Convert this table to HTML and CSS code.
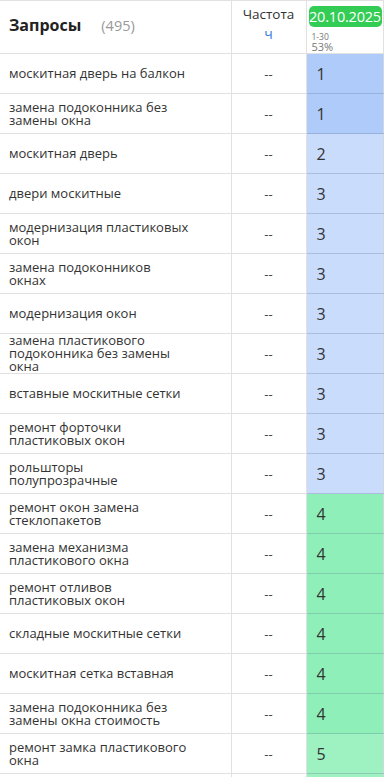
FILE: index.html
```html
<!DOCTYPE html>
<html lang="ru">
<head>
<meta charset="utf-8">
<link rel="stylesheet" href="styles.css">
</head>
<body>
<table class="grid">
  <thead>
    <tr class="head">
      <th class="q-head"><span class="title">Запросы</span><span class="count">(495)</span></th>
      <th class="f-head"><div class="f-label">Частота</div><div class="f-unit">ч</div></th>
      <th class="d-head"><div class="badge">20.10.2025</div><div class="range">1-30</div><div class="pct">53%</div></th>
    </tr>
  </thead>
  <tbody>
    <tr><td class="q">москитная дверь на балкон</td><td class="f">--</td><td class="r r1">1</td></tr>
    <tr><td class="q">замена подоконника без замены окна</td><td class="f">--</td><td class="r r1">1</td></tr>
    <tr><td class="q">москитная дверь</td><td class="f">--</td><td class="r r2">2</td></tr>
    <tr><td class="q">двери москитные</td><td class="f">--</td><td class="r r2">3</td></tr>
    <tr><td class="q">модернизация пластиковых окон</td><td class="f">--</td><td class="r r2">3</td></tr>
    <tr><td class="q">замена подоконников окнах</td><td class="f">--</td><td class="r r2">3</td></tr>
    <tr><td class="q">модернизация окон</td><td class="f">--</td><td class="r r2">3</td></tr>
    <tr><td class="q">замена пластикового подоконника без замены окна</td><td class="f">--</td><td class="r r2">3</td></tr>
    <tr><td class="q">вставные москитные сетки</td><td class="f">--</td><td class="r r2">3</td></tr>
    <tr><td class="q">ремонт форточки пластиковых окон</td><td class="f">--</td><td class="r r2">3</td></tr>
    <tr><td class="q">рольшторы полупрозрачные</td><td class="f">--</td><td class="r r2">3</td></tr>
    <tr><td class="q">ремонт окон замена стеклопакетов</td><td class="f">--</td><td class="r r4">4</td></tr>
    <tr><td class="q">замена механизма пластикового окна</td><td class="f">--</td><td class="r r4">4</td></tr>
    <tr><td class="q">ремонт отливов пластиковых окон</td><td class="f">--</td><td class="r r4">4</td></tr>
    <tr><td class="q">складные москитные сетки</td><td class="f">--</td><td class="r r4">4</td></tr>
    <tr><td class="q">москитная сетка вставная</td><td class="f">--</td><td class="r r4">4</td></tr>
    <tr><td class="q">замена подоконника без замены окна стоимость</td><td class="f">--</td><td class="r r4">4</td></tr>
    <tr><td class="q">ремонт замка пластикового окна</td><td class="f">--</td><td class="r r5">5</td></tr>
    <tr class="tail"><td class="q"></td><td class="f"></td><td class="r r5"></td></tr>
  </tbody>
</table>
</body>
</html>
```

FILE: styles.css
```css
html, body {
  margin: 0;
  padding: 0;
  background: #fff;
  overflow: hidden;
}
body {
  font-family: "Open Sans", "Liberation Sans", sans-serif;
  color: #333;
  height: 777px;
}
.grid {
  border-collapse: collapse;
  table-layout: fixed;
  width: 383px;
}
.grid th, .grid td {
  border: 1px solid #e1e1e1;
  padding: 0;
  box-sizing: border-box;
}
.grid tr > :first-child { border-left: none; }
.head { height: 53px; }
.q-head {
  width: 231px;
  text-align: left;
  padding: 0 0 4px 9px !important;
  vertical-align: middle;
}
.title {
  font-size: 16px;
  font-weight: 700;
  color: #222;
}
.count {
  font-size: 14.5px;
  font-weight: 400;
  color: #999;
  margin-left: 20px;
}
.f-head {
  width: 75px;
  vertical-align: top;
  font-weight: 400;
  padding-top: 4px !important;
}
.f-label {
  font-size: 13.5px;
  line-height: 18px;
  color: #333;
}
.f-unit {
  font-size: 14px;
  line-height: 22px;
  color: #3b7ddd;
}
.d-head {
  width: 77px;
  vertical-align: top;
  text-align: left;
  font-weight: 400;
  padding: 5px 1px 0 2px !important;
}
.badge {
  background: #33cc55;
  color: #fff;
  font-size: 14.5px;
  line-height: 21px;
  border-radius: 5px;
  text-align: center;
  letter-spacing: -0.2px;
}
.range {
  font-size: 8.5px;
  line-height: 9px;
  color: #777;
  margin-top: 5px;
  padding-left: 3px;
}
.pct {
  font-size: 11px;
  line-height: 11px;
  color: #777;
  padding-left: 3px;
}
tbody tr { height: 40px; }
tbody tr.tail { height: 10px; }
.q {
  font-size: 13px;
  line-height: 13px;
  padding: 0 41px 0 9px !important;
  vertical-align: middle;
  color: #333;
}
.f {
  text-align: center;
  font-size: 13px;
  color: #444;
  vertical-align: middle;
}
.r {
  font-size: 16px;
  padding-left: 10px !important;
  vertical-align: middle;
  color: #333;
  border-color: rgba(90, 110, 140, 0.28) !important;
}
.r1 { background: #aecbfa; }
.r2 { background: #c9dcfc; }
.r4 { background: #8ef0b8; }
.r5 { background: #9ef2c2; }
```
